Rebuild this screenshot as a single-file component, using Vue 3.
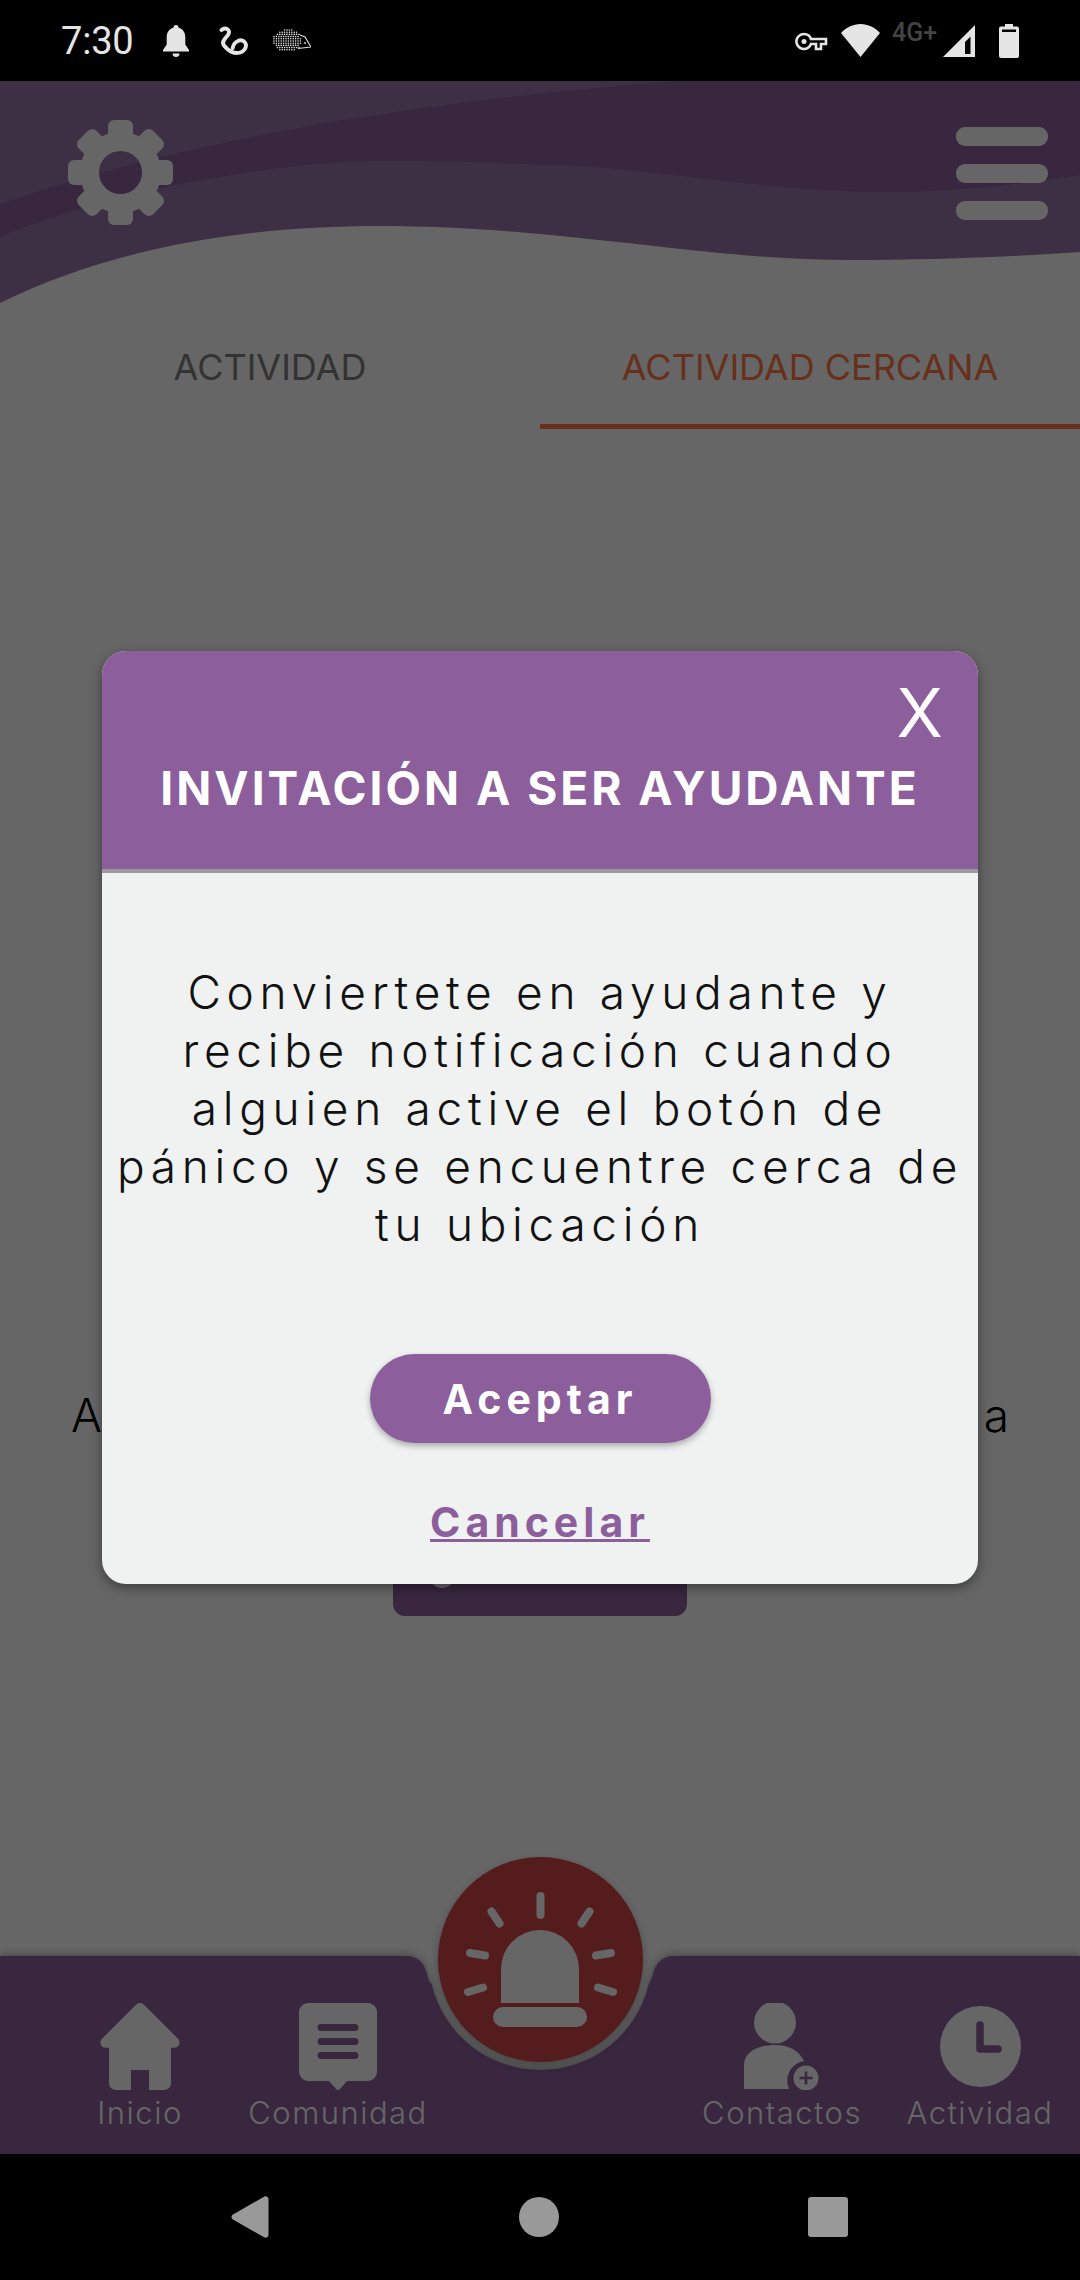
<template>
  <div class="phone">
    <div class="status-bar">
      <span class="time">7:30</span>
      <svg class="st-bell" viewBox="0 0 26 32"><path d="M13 0c1.600 0 2.600 1.200 2.600 2.800 4.400 1.200 6.700 5 6.700 9.600v7.200L26 25v1.600H0V25l3.700-5.400v-7.200c0-4.600 2.300-8.400 6.700-9.600C10.400 1.200 11.400 0 13 0zM9.500 28.400h7c0 2-1.500 3.600-3.500 3.600s-3.500-1.600-3.500-3.600z" fill="#e5e5e5"/></svg>
      <svg class="st-squiggle" viewBox="0 0 30 29"><path d="M2.500 4C6.500 .7 11.500 3.500 9.500 8 8 11.500 1.500 15 5 19.500c3 3.800 7 7.500 12.500 7.500 8 0 11-6.500 8.500-10.500-4-5-11.500-.5-12.300 5.500" fill="none" stroke="#e5e5e5" stroke-width="3.900" stroke-linecap="round"/></svg>
      <svg class="st-hedgehog" viewBox="0 0 38 23">
        <circle v-for="d in hedgehogDots" :key="d.x + '-' + d.y" :cx="d.x" :cy="d.y" r="0.8" fill="#e0e0e0"/>
        <path d="M27 6l5 2 6 10-13 1.500" fill="none" stroke="#e0e0e0" stroke-width="1.100"/>
        <circle cx="32" cy="14" r="0.9" fill="#e0e0e0"/>
      </svg>
      <div class="st-right">
        <svg class="st-key" viewBox="0 0 33 19"><path d="M9 2a7.500 7.500 0 1 0 7 10h5v5h5v-5h5V7H16A7.500 7.500 0 0 0 9 2z" fill="none" stroke="#e5e5e5" stroke-width="2.600"/><circle cx="9" cy="9.500" r="2.500" fill="#e5e5e5"/></svg>
        <svg class="st-wifi" viewBox="0 0 39 33"><path d="M19.500 33L0 9C5 3.500 12 0 19.500 0S34 3.500 39 9z" fill="#e5e5e5"/></svg>
        <span class="st-net">4G+</span>
        <svg class="st-signal" viewBox="0 0 32 32"><path d="M0 32L32 0v32zM22 29h5.500V11.500L22 17z" fill="#e5e5e5" fill-rule="evenodd"/></svg>
        <svg class="st-battery" viewBox="0 0 20 34"><path d="M6 0h8v2.500h4a2 2 0 0 1 2 2V32a2 2 0 0 1-2 2H2a2 2 0 0 1-2-2V4.500a2 2 0 0 1 2-2h4zM3 5.500v2.500h14V5.500z" fill="#e5e5e5" fill-rule="evenodd"/></svg>
      </div>
    </div>

    <main class="screen">
      <header class="top">
        <svg class="waves" viewBox="0 0 1080 222" preserveAspectRatio="none">
          <path d="M0 222C110 168 240 145 379 145C560 145 700 179 850 179C930 179 1010 176 1080 171V0H0Z" fill="#9878ac"/>
          <path d="M0 123C200 55 420 20 678 0H1080V94C1010 105 950 111 884 111C760 111 640 84 540 84C480 81 400 78 344 81C220 90 100 115 0 156Z" fill="#8c619d"/>
        </svg>
        <svg class="gear" viewBox="0 0 105 105">
          <circle cx="52.500" cy="52.500" r="31" fill="none" stroke="#fff" stroke-width="19"/>
          <rect v-for="a in gearTeeth" :key="a" x="40" y="0" width="25" height="30" rx="6" fill="#fff" :transform="`rotate(${a} 52.500 52.500)`"/>
        </svg>
        <div class="burger">
          <span></span>
          <span></span>
          <span></span>
        </div>
      </header>

      <nav class="tabs">
        <div class="tab">ACTIVIDAD</div>
        <div class="tab tab-active">ACTIVIDAD CERCANA</div>
      </nav>

      <section class="empty">
        <div class="empty-text">
          <span>A</span>
          <span>a</span>
        </div>
        <div class="empty-btn"><i></i></div>
      </section>
    </main>

    <footer class="bottom-nav">
      <svg class="nav-shape" viewBox="0 0 1080 198">
        <path d="M0 0H406C420 0 426 10 428 22C429 25 430 27 431.700 28A111.500 111.500 0 0 0 648.800 28C650 26 652 22 653 18C655 8 662 0 674 0H1080V198H0Z" fill="#8c619d"/>
      </svg>

      <div class="nav-item">
        <svg class="nav-icon" width="80" height="87" viewBox="0 0 80 87">
          <path d="M40 0c1.500 0 3 .7 4 1.700l34 34c3 3 1.500 9-3.500 9H71V80a7 7 0 0 1-7 7H49V67H31v20H16a7 7 0 0 1-7-7V44.700H5.500C.5 44.700-1 38.700 2 35.700l34-34C37 .7 38.500 0 40 0z" fill="#fff"/>
        </svg>
        <span>Inicio</span>
      </div>
      <div class="nav-item">
        <svg class="nav-icon" width="78" height="87" viewBox="0 0 78 87">
          <path d="M9 0h60a9 9 0 0 1 9 9v60a9 9 0 0 1-9 9H48l-7 8a3 3 0 0 1-4 0l-7-8H9a9 9 0 0 1-9-9V9a9 9 0 0 1 9-9zM22 21a3.500 3.500 0 0 0 0 7h34a3.500 3.500 0 0 0 0-7zM22 35a3.500 3.500 0 0 0 0 7h34a3.500 3.500 0 0 0 0-7zM22 49a3.500 3.500 0 0 0 0 7h34a3.500 3.500 0 0 0 0-7z" fill="#fff" fill-rule="evenodd"/>
        </svg>
        <span>Comunidad</span>
      </div>
      <div class="nav-gap"></div>
      <div class="nav-item">
        <svg class="nav-icon" width="76" height="87" viewBox="0 0 76 87">
          <circle cx="31" cy="19.500" r="21" fill="#fff"/>
          <path d="M0 86V62c0-12 12-20 31-20 15 0 24 6 29 16a20 20 0 0 0-15 28z" fill="#fff"/>
          <circle cx="62" cy="75" r="14" fill="#fff" stroke="#8c619d" stroke-width="3"/>
          <path d="M55.500 75h13M62 68.500v13" stroke="#8c619d" stroke-width="2.600" fill="none"/>
        </svg>
        <span>Contactos</span>
      </div>
      <div class="nav-item">
        <svg class="nav-icon" width="81" height="81" viewBox="0 0 81 81">
          <circle cx="40.500" cy="40.500" r="40.500" fill="#fff"/>
          <path d="M40 19v24h18" fill="none" stroke="#8c619d" stroke-width="7.500" stroke-linecap="round" stroke-linejoin="round"/>
        </svg>
        <span>Actividad</span>
      </div>

      <button class="alarm">
        <svg viewBox="0 0 205 205" width="205" height="205">
          <path d="M63 146V112a39 39 0 0 1 78 0v34z" fill="#fff"/>
          <rect x="55" y="150" width="94" height="20" rx="10" fill="#fff"/>
          <g stroke="#fff" stroke-width="8" stroke-linecap="round" fill="none">
            <path d="M102.500 39v19"/>
            <path d="M53.500 54.500l8 12"/>
            <path d="M151.500 54.500l-8 12"/>
            <path d="M32 96l15 2.500"/>
            <path d="M173 96l-15 2.500"/>
            <path d="M30 135l15-4.500"/>
            <path d="M175 135l-15-4.500"/>
          </g>
        </svg>
      </button>
    </footer>

    <div class="system-nav">
      <svg width="38" height="42" viewBox="0 0 38 42"><path d="M2 18.500L33 .7c2-1 4.500 0 4.500 2.300v36c0 2.300-2.500 3.300-4.500 2.300L2 23.500c-2-1-2-4 0-5z" fill="#999"/></svg>
      <div class="sys-circle"></div>
      <div class="sys-square"></div>
    </div>

    <div class="overlay">
      <div class="modal">
        <div class="modal-head">
          <span class="modal-close">X</span>
          <h2>INVITACIÓN A SER AYUDANTE</h2>
        </div>
        <div class="modal-body">
          <p>Conviertete en ayudante y<br>recibe notificación cuando<br>alguien active el botón de<br>pánico y se encuentre cerca de<br>tu ubicación</p>
          <button class="btn-accept">Aceptar</button>
          <a class="btn-cancel">Cancelar</a>
        </div>
      </div>
    </div>
  </div>
</template>

<script setup>
const gearTeeth = [0, 45, 90, 135, 180, 225, 270, 315];

// hedgehog spines are just a grid of dots clipped to an oval
const hedgehogDots = [];
for (let y = 1; y < 23; y += 2.2) {
  for (let x = 1; x < 28; x += 2.4) {
    const dx = (x - 14) / 14;
    const dy = (y - 11.5) / 11.5;
    if (dx * dx + dy * dy <= 1) {
      hedgehogDots.push({ x: x + (Math.round(y) % 2), y });
    }
  }
}
</script>

<style>
html,
body {
  margin: 0;
  background: #000;
}
</style>

<style scoped>
.phone {
  position: relative;
  width: 1080px;
  height: 2280px;
  display: flex;
  flex-direction: column;
  overflow: hidden;
  background: #fff;
  font-family: Inter, "Noto Sans", sans-serif;
}

.status-bar {
  height: 81px;
  flex: none;
  display: flex;
  align-items: center;
  padding: 0 61px;
  background: #000;
  box-sizing: border-box;
  color: #e5e5e5;
}

.time {
  font-family: Roboto, sans-serif;
  font-size: 38px;
  width: 72px;
  margin-right: 30px;
  letter-spacing: -0.2px;
  line-height: 1;
}

.st-bell {
  width: 26px;
  height: 32px;
  margin-right: 30px;
}

.st-squiggle {
  width: 30px;
  height: 29px;
  margin-right: 24px;
}

.st-hedgehog {
  width: 38px;
  height: 23px;
}

.st-right {
  margin-left: auto;
  display: flex;
  align-items: center;
}

.st-key {
  width: 33px;
  height: 19px;
  margin-right: 13px;
  margin-top: 1px;
}

.st-wifi {
  width: 39px;
  height: 33px;
  margin-right: 12px;
}

.st-net {
  width: 44px;
  margin-right: 7px;
  margin-bottom: 15px;
  font-family: Roboto, sans-serif;
  font-weight: 500;
  font-size: 25px;
  line-height: 24px;
  color: #444;
}

.st-signal {
  width: 32px;
  height: 32px;
  margin-right: 24px;
}

.st-battery {
  width: 20px;
  height: 34px;
}

.screen {
  flex: 1;
  min-height: 0;
  display: flex;
  flex-direction: column;
}

.top {
  position: relative;
  height: 222px;
  flex: none;
  display: flex;
  justify-content: space-between;
  align-items: flex-start;
  padding: 39px 32px 0 68px;
  box-sizing: border-box;
}

.waves {
  position: absolute;
  left: 0;
  top: 0;
  width: 1080px;
  height: 222px;
}

.gear {
  position: relative;
  width: 105px;
  height: 105px;
}

.burger {
  position: relative;
  width: 92px;
  margin-top: 7px;
  display: flex;
  flex-direction: column;
  gap: 18px;
}

.burger span {
  height: 19px;
  border-radius: 9px;
  background: #fff;
}

.tabs {
  display: grid;
  grid-template-columns: 1fr 1fr;
  flex: none;
}

.tab {
  height: 126px;
  box-sizing: border-box;
  padding-top: 28px;
  border-bottom: 5px solid transparent;
  text-align: center;
  font-size: 36px;
  line-height: 72px;
  color: #808080;
}

.tab-active {
  color: #ff7846;
  border-bottom-color: #ff7846;
}

.empty {
  display: flex;
  flex-direction: column;
  align-items: center;
}

.empty-text {
  width: 938px;
  margin-top: 958px;
  display: flex;
  justify-content: space-between;
  font-size: 46px;
  font-weight: 300;
  line-height: 56px;
  color: #000;
}

.empty-btn {
  width: 294px;
  height: 90px;
  margin-top: 83px;
  box-sizing: border-box;
  padding: 36px 0 0 36px;
  border-radius: 12px;
  background: #8c619d;
}

.empty-btn i {
  display: block;
  width: 26px;
  height: 26px;
  border-radius: 50%;
  background: #fff;
}

.bottom-nav {
  position: relative;
  height: 198px;
  flex: none;
  display: grid;
  grid-template-columns: 198px 198px 246px 198px 198px;
  padding-left: 41px;
  box-sizing: border-box;
  z-index: 1;
}

.nav-shape {
  position: absolute;
  left: 0;
  top: 0;
  width: 1080px;
  height: 198px;
  overflow: visible;
  filter: drop-shadow(0 -1px 4px rgba(0, 0, 0, 0.35));
}

.nav-item {
  position: relative;
  height: 198px;
  box-sizing: border-box;
  padding-top: 47px;
  display: flex;
  flex-direction: column;
  align-items: center;
  color: #fff;
  font-size: 31px;
  font-weight: 300;
  letter-spacing: 1.500px;
}

.nav-icon {
  height: 87px;
  flex: none;
}

.nav-item span {
  margin-top: 5px;
  line-height: 36px;
}

.alarm {
  position: absolute;
  left: 438px;
  top: -99px;
  width: 205px;
  height: 205px;
  padding: 0;
  border: 0;
  border-radius: 50%;
  background: #d24646;
  box-shadow: 0 4px 10px rgba(0, 0, 0, 0.3);
}

.alarm svg {
  display: block;
}

.system-nav {
  height: 126px;
  flex: none;
  display: grid;
  grid-template-columns: repeat(3, 289px);
  justify-content: center;
  justify-items: center;
  align-items: center;
  padding-right: 3px;
  box-sizing: border-box;
  background: #000;
}

.sys-circle {
  width: 40px;
  height: 40px;
  border-radius: 50%;
  background: #999;
}

.sys-square {
  width: 40px;
  height: 40px;
  border-radius: 3px;
  background: #999;
}

.overlay {
  position: absolute;
  left: 0;
  right: 0;
  top: 81px;
  bottom: 126px;
  z-index: 2;
  display: flex;
  align-items: center;
  justify-content: center;
  background: rgba(0, 0, 0, 0.6);
}

.modal {
  width: 876px;
  height: 933px;
  display: flex;
  flex-direction: column;
  border-radius: 24px;
  overflow: hidden;
  background: #f0f2f1;
  box-shadow: 0 4px 12px rgba(0, 0, 0, 0.4);
}

.modal-head {
  height: 222px;
  flex: none;
  box-sizing: border-box;
  padding: 21px 35px 0;
  display: flex;
  flex-direction: column;
  background: #8c5f9c;
  border-bottom: 4px solid #9b9aa0;
  color: #fff;
}

.modal-close {
  align-self: flex-end;
  font-size: 68px;
  font-weight: 400;
  line-height: 80px;
}

.modal-head h2 {
  margin: 0;
  margin-top: 8px;
  text-align: center;
  font-size: 46px;
  font-weight: 700;
  letter-spacing: 3px;
  line-height: 56px;
  white-space: nowrap;
}

.modal-body {
  flex: 1;
  display: flex;
  flex-direction: column;
  align-items: center;
}

.modal-body p {
  margin: 90px 0 0;
  text-align: center;
  white-space: nowrap;
  font-size: 46px;
  font-weight: 300;
  line-height: 58px;
  letter-spacing: 5.700px;
  color: #111;
}

.btn-accept {
  width: 341px;
  height: 89px;
  margin-top: 101px;
  padding: 0;
  border: 0;
  border-radius: 45px;
  background: #8c5f9c;
  color: #fff;
  font-family: inherit;
  font-size: 41px;
  font-weight: 700;
  letter-spacing: 5px;
  box-shadow: 0 3px 6px rgba(0, 0, 0, 0.3);
}

.btn-cancel {
  margin-top: 54px;
  color: #8c5f9c;
  font-size: 41px;
  font-weight: 700;
  letter-spacing: 5px;
  text-decoration: underline;
  text-decoration-thickness: 3px;
}
</style>
